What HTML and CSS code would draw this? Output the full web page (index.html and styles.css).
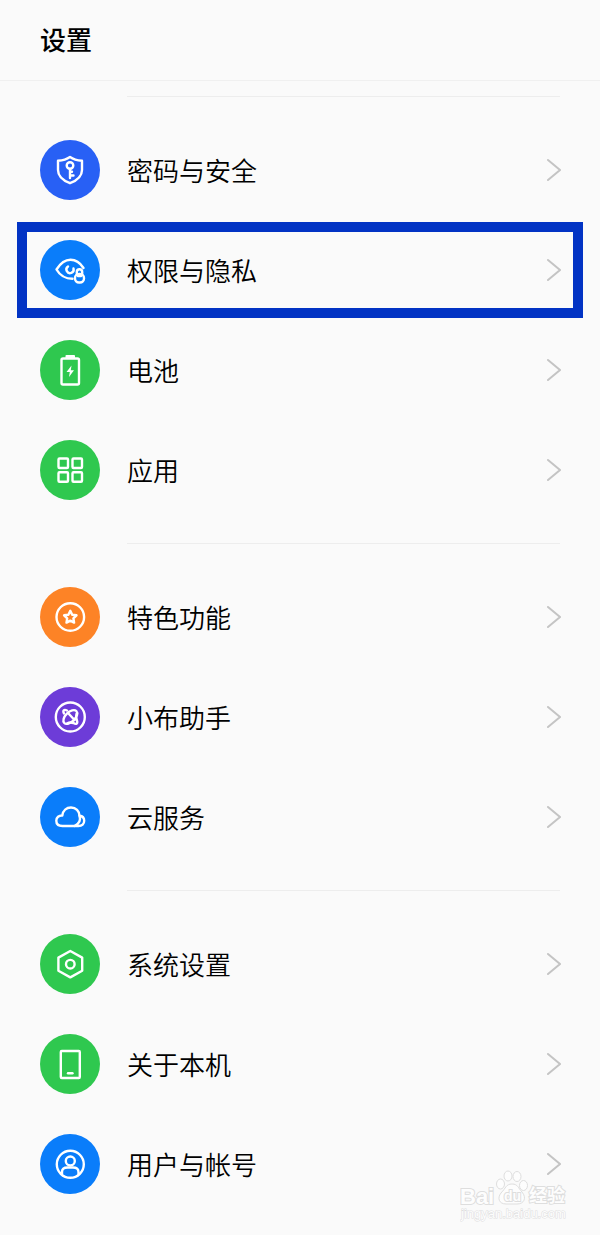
FILE: index.html
```html
<!DOCTYPE html>
<html lang="zh-CN">
<head>
  <meta charset="UTF-8">
  <meta name="viewport" content="width=device-width, initial-scale=1.0">
  <title>设置</title>
  <link rel="stylesheet" href="styles.css">
</head>
<body>

  <header class="header">
    <h1>设置</h1>
  </header>

  <main>
    <nav class="group">
      <a class="item" href="#security">
        <svg class="icon indigo" viewBox="0 0 60 60">
          <path d="M30 17 C26.5 19.5 22 20.5 18 20.8 V30 C18 36.500 23 40.500 30 43.200 C37 40.500 42 36.500 42 30 V20.800 C38 20.500 33.500 19.500 30 17 Z"/>
          <circle cx="30" cy="25.500" r="3.300"/>
          <path d="M30 29 V38 M30 35.500 H33.500 M30 31.800 H32"/>
        </svg>
        <span class="label">密码与安全</span>
        <svg class="arrow" viewBox="0 0 14 24"><path d="M1 2 L13 12 L1 22"/></svg>
      </a>
      <a class="item selected" href="#privacy">
        <svg class="icon blue" viewBox="0 0 60 60">
          <path d="M43.500 28 C40 22.500 36 19.800 30.500 19.800 C24.500 19.800 20 24 16.500 29.500 C20 35.500 25 38.800 32.500 38.800"/>
          <path d="M28 26.500 A3.600 3.600 0 1 0 33.500 28.500"/>
          <path d="M36.800 33.500 V32 A2.700 2.700 0 0 1 42.200 32 V33.500"/>
          <rect x="35" y="34" width="9" height="8.500" rx="4"/>
          <path d="M38 36 H41"/>
        </svg>
        <span class="label">权限与隐私</span>
        <svg class="arrow" viewBox="0 0 14 24"><path d="M1 2 L13 12 L1 22"/></svg>
      </a>
      <a class="item" href="#battery">
        <svg class="icon green" viewBox="0 0 60 60">
          <rect x="21.500" y="18.500" width="17.500" height="26" rx="1.500"/>
          <path class="solid" d="M25.500 18 V15.800 Q25.500 15 26.500 15 H34 Q35 15 35 15.800 V18 Z"/>
          <path class="solid" d="M31.500 25.500 L26.500 32 H29.800 L29 37 L34 30.300 H30.800 Z"/>
        </svg>
        <span class="label">电池</span>
        <svg class="arrow" viewBox="0 0 14 24"><path d="M1 2 L13 12 L1 22"/></svg>
      </a>
      <a class="item" href="#apps">
        <svg class="icon green" viewBox="0 0 60 60">
          <rect x="18.500" y="18.500" width="9.500" height="9.500" rx="1"/>
          <rect x="32.500" y="18.500" width="9.500" height="9.500" rx="1"/>
          <rect x="18.500" y="32.300" width="9.500" height="9.500" rx="1"/>
          <rect x="32.500" y="32.300" width="9.500" height="9.500" rx="1"/>
        </svg>
        <span class="label">应用</span>
        <svg class="arrow" viewBox="0 0 14 24"><path d="M1 2 L13 12 L1 22"/></svg>
      </a>
    </nav>

    <nav class="group">
      <a class="item" href="#features">
        <svg class="icon orange" viewBox="0 0 60 60">
          <circle cx="30.300" cy="30" r="13.800"/>
          <path d="M30.300 23.800 L32.200 27.700 L36.500 28.300 L33.400 31.300 L34.100 35.600 L30.300 33.600 L26.500 35.600 L27.200 31.300 L24.100 28.300 L28.400 27.700 Z"/>
        </svg>
        <span class="label">特色功能</span>
        <svg class="arrow" viewBox="0 0 14 24"><path d="M1 2 L13 12 L1 22"/></svg>
      </a>
      <a class="item" href="#breeno">
        <svg class="icon purple" viewBox="0 0 60 60">
          <circle cx="30.300" cy="30" r="14.500"/>
          <ellipse cx="30.300" cy="30" rx="4.800" ry="8.500" transform="rotate(45 30.300 30)"/>
          <path d="M27 23.500 C24 22 22.500 23.500 24 26.500 M28.500 26.500 L34.500 33 M36.500 27 Q35.500 31 37 33.500 C38 37 36 37.500 33.500 36 Q30 34.800 27 36.500"/>
        </svg>
        <span class="label">小布助手</span>
        <svg class="arrow" viewBox="0 0 14 24"><path d="M1 2 L13 12 L1 22"/></svg>
      </a>
      <a class="item" href="#cloud">
        <svg class="icon blue" viewBox="0 0 60 60">
          <path d="M22.500 39 C18.500 39 16.300 36.800 16.300 33.800 C16.300 30.300 19 28.300 22.300 28.500 C23 23.500 26.500 20.500 31 20.500 C36 20.500 39.300 24 39.500 28.700 C42.500 29 44.200 31.200 44.200 33.800 C44.200 36.800 42 39 38.500 39 Z"/>
          <path d="M39.500 28.700 C40.800 33 39 37 34.500 39"/>
        </svg>
        <span class="label">云服务</span>
        <svg class="arrow" viewBox="0 0 14 24"><path d="M1 2 L13 12 L1 22"/></svg>
      </a>
    </nav>

    <nav class="group">
      <a class="item" href="#system">
        <svg class="icon green" viewBox="0 0 60 60">
          <path d="M30.300 17 L42.200 23.600 V36.800 L30.300 43.400 L18.400 36.800 V23.600 Z"/>
          <circle cx="30.300" cy="30.200" r="4.300"/>
        </svg>
        <span class="label">系统设置</span>
        <svg class="arrow" viewBox="0 0 14 24"><path d="M1 2 L13 12 L1 22"/></svg>
      </a>
      <a class="item" href="#about">
        <svg class="icon green" viewBox="0 0 60 60">
          <rect x="20.800" y="17" width="19" height="27" rx="1"/>
          <path d="M28 39.300 H32.500"/>
        </svg>
        <span class="label">关于本机</span>
        <svg class="arrow" viewBox="0 0 14 24"><path d="M1 2 L13 12 L1 22"/></svg>
      </a>
      <a class="item" href="#accounts">
        <svg class="icon blue" viewBox="0 0 60 60">
          <circle cx="30.300" cy="30.300" r="13.500"/>
          <circle cx="30.300" cy="27" r="4.500"/>
          <path d="M22 40 V38 C22 34.500 25 33.500 27.500 33.500 H33 C36 33.500 38.500 34.500 38.500 38 V40"/>
        </svg>
        <span class="label">用户与帐号</span>
        <svg class="arrow" viewBox="0 0 14 24"><path d="M1 2 L13 12 L1 22"/></svg>
      </a>
    </nav>
  </main>

  <svg class="watermark" viewBox="0 0 116 56">
    <ellipse cx="40.500" cy="17" rx="4" ry="5"/>
    <ellipse cx="48" cy="9" rx="4" ry="5"/>
    <ellipse cx="57" cy="9.500" rx="4" ry="5"/>
    <ellipse cx="63.500" cy="18.500" rx="4" ry="5"/>
    <path d="M52 17 C58 17 58 21 62 25 C67 31 64 37 57 37 H46 C39 37 37 31 41 26 C46 21 46 17 52 17 Z"/>
    <text class="logo-text" x="0" y="37">Bai</text>
    <text class="logo-du" x="44" y="34">du</text>
    <text class="logo-cn" x="69" y="35">经验</text>
    <text class="logo-url" x="1" y="51">jingyan.baidu.com</text>
  </svg>

</body>
</html>
```
FILE: styles.css
```css
* {
  box-sizing: border-box;
}

body {
  margin: 0;
  position: relative;
  background: #fafafa;
  color: #000;
  font-family: "Noto Sans CJK SC", sans-serif;
}

.header {
  padding: 19px 40px 21px;
  border-bottom: 1px solid #f0f0f0;
}

.header h1 {
  margin: 0;
  font-size: 26px;
  line-height: 40px;
  font-weight: 500;
}

main {
  padding-top: 15px;
}

.group {
  padding-bottom: 23px;
}

.group:last-child {
  padding-bottom: 21px;
}

.group::before {
  content: "";
  display: block;
  height: 1px;
  margin: 0 40px 23px 127px;
  background: #ededed;
}

.item {
  position: relative;
  display: flex;
  align-items: center;
  height: 100px;
  padding: 0 39px 0 40px;
  color: inherit;
  text-decoration: none;
}

.item.selected::after {
  content: "";
  position: absolute;
  inset: 2px 17px;
  border: 10px solid #0233c4;
}

.icon {
  width: 60px;
  height: 60px;
  border-radius: 50%;
  fill: none;
  stroke: #fff;
  stroke-width: 2.4;
  stroke-linecap: round;
  stroke-linejoin: round;
}

.icon .solid {
  fill: #fff;
  stroke: none;
}

.indigo {
  background: #2860f5;
}

.blue {
  background: #0a7dfa;
}

.green {
  background: #2fc84f;
}

.orange {
  background: #fd8326;
}

.purple {
  background: #6d3cd8;
}

.label {
  flex: 1;
  margin-left: 27px;
  font-size: 26px;
  line-height: 40px;
  font-weight: 350;
}

.arrow {
  width: 14px;
  height: 24px;
  fill: none;
  stroke: #c4c4c4;
  stroke-width: 2;
  stroke-linecap: round;
}

.watermark {
  position: absolute;
  right: 24px;
  bottom: 12px;
  width: 116px;
  height: 56px;
  fill: #fdfdfd;
  stroke: #dedede;
  stroke-width: 1;
  font-family: "Liberation Sans", sans-serif;
}

.watermark text {
  paint-order: stroke;
  stroke-width: 2;
}

.logo-text {
  font-size: 22px;
  font-weight: bold;
}

.logo-du {
  font-size: 14px;
  font-weight: bold;
}

.logo-cn {
  font-family: "Noto Sans CJK SC", sans-serif;
  font-size: 18px;
  font-weight: bold;
}

.watermark .logo-url {
  font-size: 13px;
  stroke-width: 1;
}
```
